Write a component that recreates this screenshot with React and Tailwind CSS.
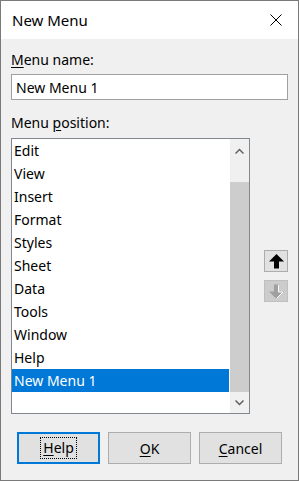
import React from 'react';

const items = ['Edit', 'View', 'Insert', 'Format', 'Styles', 'Sheet', 'Data', 'Tools', 'Window', 'Help', 'New Menu 1'];

const ArrowUp = () => (
    <svg width="15" height="15" viewBox="0 0 15 15">
        <polygon points="7.5,0 15,7.5 10,7.5 10,14.5 5,14.5 5,7.5 0,7.5" fill="#000" />
    </svg>
);

const ArrowDown = () => (
    <svg width="15" height="15" viewBox="0 0 15 15">
        <polygon points="5,0.5 10,0.5 10,7.5 15,7.5 7.5,15 0,7.5 5,7.5" fill="#a0a0a0" />
        <polyline points="9.5,1 9.5,8 14,8 7.5,14.5" fill="none" stroke="#fff" strokeWidth="1" />
    </svg>
);

const Chevron = ({ up }) => (
    <svg width="9" height="6" viewBox="0 0 9 6">
        <polyline points={up ? '0.5,5.5 4.5,1.5 8.5,5.5' : '0.5,0.5 4.5,4.5 8.5,0.5'} fill="none" stroke="#606060" strokeWidth="1.5" />
    </svg>
);

const DialogButton = ({ children, focused }) => (
    <button
        className={`w-[83px] h-[32px] flex items-center justify-center bg-[#e1e1e1] text-[14px] text-black ${focused ? 'border-2 border-[#0078d7]' : 'border border-[#adadad]'}`}
    >
        {focused ? (
            <span className="px-[2px] py-[1px] border border-dotted border-black leading-[18px]">{children}</span>
        ) : (
            children
        )}
    </button>
);

export default function App() {
    return (
        <div
            className="w-[299px] h-[481px] border border-[#7a7a7a] bg-[#f0f0f0] flex flex-col text-black"
            style={{ fontFamily: '"Noto Sans", "Open Sans", sans-serif' }}
        >
            {/* Title bar */}
            <div className="h-[38px] bg-white flex items-center justify-between pl-[11px] pr-[16px] shrink-0">
                <span className="text-[15px]">New Menu</span>
                <svg width="12" height="12" viewBox="0 0 12 12">
                    <path d="M0.5 0.5 L11.5 11.5 M11.5 0.5 L0.5 11.5" stroke="#000" strokeWidth="1" />
                </svg>
            </div>

            {/* Body */}
            <div className="flex flex-col px-[10px] pt-[11px]">
                <div className="text-[14px] leading-[20px]">
                    <span className="underline underline-offset-2">M</span>enu name:
                </div>
                <div className="mt-[4px] w-[277px] h-[26px] bg-white border border-[#a0a0a0] flex items-center px-[4px] text-[14px]">
                    New Menu 1
                </div>
                <div className="mt-[13px] text-[14px] leading-[20px]">
                    Menu <span className="underline underline-offset-2">p</span>osition:
                </div>

                <div className="mt-[5px] flex">
                    {/* List box */}
                    <div className="w-[239px] h-[276px] bg-white border border-[#828790] flex">
                        <div className="flex-1 flex flex-col pr-[1px]">
                            {items.map((item, i) => (
                                <div
                                    key={item}
                                    className={`h-[23px] flex items-center pl-[2px] text-[14px] ${i === items.length - 1 ? 'bg-[#0078d7] text-white' : ''}`}
                                >
                                    {item}
                                </div>
                            ))}
                        </div>
                        <div className="w-[19px] bg-[#f0f0f0] flex flex-col">
                            <div className="h-[23px] flex items-center justify-center">
                                <Chevron up />
                            </div>
                            <div className="mt-[20px] h-[210px] bg-[#cdcdcd]" />
                            <div className="flex-1 flex items-center justify-center">
                                <Chevron />
                            </div>
                        </div>
                    </div>

                    {/* Move buttons */}
                    <div className="ml-[14px] mt-[112px] flex flex-col gap-[8px]">
                        <div className="w-[24px] h-[22px] bg-[#e1e1e1] border border-[#adadad] flex items-center justify-center">
                            <ArrowUp />
                        </div>
                        <div className="w-[24px] h-[22px] bg-[#cccccc] border border-[#bfbfbf] flex items-center justify-center">
                            <ArrowDown />
                        </div>
                    </div>
                </div>

                {/* Bottom buttons */}
                <div className="mt-[18px] ml-[6px] flex gap-[8px]">
                    <DialogButton focused>
                        <span className="underline underline-offset-2">H</span>elp
                    </DialogButton>
                    <DialogButton>
                        <span className="underline underline-offset-2">O</span>K
                    </DialogButton>
                    <DialogButton>
                        <span className="underline underline-offset-2">C</span>ancel
                    </DialogButton>
                </div>
            </div>
        </div>
    );
}
